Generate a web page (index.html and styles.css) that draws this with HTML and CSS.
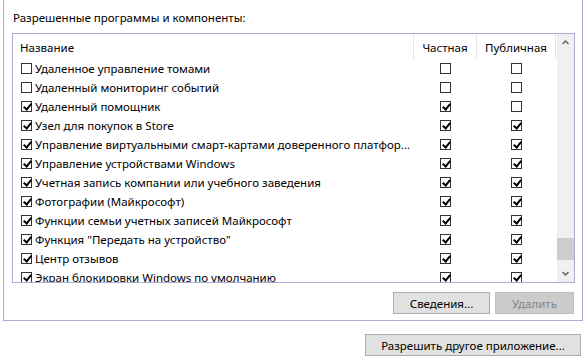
FILE: index.html
```html
<!DOCTYPE html>
<html lang="ru">
<head>
    <meta charset="UTF-8">
    <title>Разрешенные программы</title>
    <link rel="stylesheet" href="styles.css">
</head>
<body>

    <div class="group">
        <div class="group-title">Разрешенные программы и компоненты:</div>

        <div class="list">
            <div class="list-body">
                <div class="row row-head">
                    <div class="cell cell-name">Название</div>
                    <div class="cell cell-mid">Частная</div>
                    <div class="cell cell-mid">Публичная</div>
                </div>

                <div class="row">
                    <div class="cell cell-name"><span class="cb"></span>Удаленное управление томами</div>
                    <div class="cell cell-mid"><span class="cb"></span></div>
                    <div class="cell cell-mid"><span class="cb"></span></div>
                </div>
                <div class="row">
                    <div class="cell cell-name"><span class="cb"></span>Удаленный мониторинг событий</div>
                    <div class="cell cell-mid"><span class="cb"></span></div>
                    <div class="cell cell-mid"><span class="cb"></span></div>
                </div>
                <div class="row">
                    <div class="cell cell-name"><span class="cb on"></span>Удаленный помощник</div>
                    <div class="cell cell-mid"><span class="cb on"></span></div>
                    <div class="cell cell-mid"><span class="cb"></span></div>
                </div>
                <div class="row">
                    <div class="cell cell-name"><span class="cb on"></span>Узел для покупок в Store</div>
                    <div class="cell cell-mid"><span class="cb on"></span></div>
                    <div class="cell cell-mid"><span class="cb on"></span></div>
                </div>
                <div class="row">
                    <div class="cell cell-name"><span class="cb on"></span>Управление виртуальными смарт-картами доверенного платфор...</div>
                    <div class="cell cell-mid"><span class="cb on"></span></div>
                    <div class="cell cell-mid"><span class="cb on"></span></div>
                </div>
                <div class="row">
                    <div class="cell cell-name"><span class="cb on"></span>Управление устройствами Windows</div>
                    <div class="cell cell-mid"><span class="cb on"></span></div>
                    <div class="cell cell-mid"><span class="cb on"></span></div>
                </div>
                <div class="row">
                    <div class="cell cell-name"><span class="cb on"></span>Учетная запись компании или учебного заведения</div>
                    <div class="cell cell-mid"><span class="cb on"></span></div>
                    <div class="cell cell-mid"><span class="cb on"></span></div>
                </div>
                <div class="row">
                    <div class="cell cell-name"><span class="cb on"></span>Фотографии (Майкрософт)</div>
                    <div class="cell cell-mid"><span class="cb on"></span></div>
                    <div class="cell cell-mid"><span class="cb on"></span></div>
                </div>
                <div class="row">
                    <div class="cell cell-name"><span class="cb on"></span>Функции семьи учетных записей Майкрософт</div>
                    <div class="cell cell-mid"><span class="cb on"></span></div>
                    <div class="cell cell-mid"><span class="cb on"></span></div>
                </div>
                <div class="row">
                    <div class="cell cell-name"><span class="cb on"></span>Функция "Передать на устройство"</div>
                    <div class="cell cell-mid"><span class="cb on"></span></div>
                    <div class="cell cell-mid"><span class="cb on"></span></div>
                </div>
                <div class="row">
                    <div class="cell cell-name"><span class="cb on"></span>Центр отзывов</div>
                    <div class="cell cell-mid"><span class="cb on"></span></div>
                    <div class="cell cell-mid"><span class="cb on"></span></div>
                </div>
                <div class="row">
                    <div class="cell cell-name"><span class="cb on"></span>Экран блокировки Windows по умолчанию</div>
                    <div class="cell cell-mid"><span class="cb on"></span></div>
                    <div class="cell cell-mid"><span class="cb on"></span></div>
                </div>
            </div>

            <div class="scrollbar">
                <div class="scroll-btn">
                    <svg width="7" height="5" viewBox="0 0 7 5"><polyline points="0.5,4 3.5,1 6.5,4" fill="none" stroke="#606060" stroke-width="1.4"/></svg>
                </div>
                <div class="scroll-track">
                    <div class="scroll-thumb"></div>
                </div>
                <div class="scroll-btn">
                    <svg width="7" height="5" viewBox="0 0 7 5"><polyline points="0.5,1 3.5,4 6.5,1" fill="none" stroke="#606060" stroke-width="1.4"/></svg>
                </div>
            </div>
        </div>

        <div class="actions">
            <button class="btn btn-info">Сведения...</button>
            <button class="btn btn-remove" disabled>Удалить</button>
        </div>
    </div>

    <div class="footer">
        <button class="btn btn-allow">Разрешить другое приложение...</button>
    </div>

</body>
</html>
```

FILE: styles.css
```css
* {
    box-sizing: border-box;
    margin: 0;
    padding: 0;
    font-family: 'Noto Sans', sans-serif;
}

body {
    background-color: #ffffff;
    color: #000000;
    font-size: 11.5px;
    width: 586px;
    height: 356px;
    overflow: hidden;
}

.group {
    margin-left: 3px;
    width: 580px;
    height: 321px;
    border: 1px solid #acacd6;
    border-top: none;
}

.group-title {
    padding: 10px 0 0 9px;
    line-height: 16px;
    height: 33px;
}

.list {
    display: flex;
    margin-left: 8px;
    width: 563px;
    height: 250px;
    border: 1px solid #acacd6;
    overflow: hidden;
}

.list-body {
    flex: 1;
}

.row {
    display: grid;
    grid-template-columns: 401px 63px 79px;
    height: 19px;
    align-items: center;
}

.row-head {
    height: 25px;
}

.row-head .cell {
    height: 100%;
    border-right: 1px solid #e5e5e5;
    padding-top: 3px;
}

.row-head .cell-name {
    padding-left: 7px;
}

.cell {
    display: flex;
    align-items: center;
    white-space: nowrap;
    line-height: 16px;
}

.cell-name {
    padding-left: 8px;
}

.cell-mid {
    justify-content: center;
}

.cb {
    position: relative;
    display: inline-block;
    flex-shrink: 0;
    width: 11px;
    height: 11px;
    border: 1px solid #333333;
    background: #ffffff;
    margin-right: 3px;
}

.cell-mid .cb {
    margin-right: 0;
}

.cb.on::after {
    content: '';
    position: absolute;
    left: 3px;
    top: 0;
    width: 3px;
    height: 6px;
    border: solid #000000;
    border-width: 0 2px 2px 0;
    transform: rotate(40deg);
}

.scrollbar {
    width: 17px;
    display: flex;
    flex-direction: column;
    background-color: #f0f0f0;
}

.scroll-btn {
    height: 17px;
    display: flex;
    align-items: center;
    justify-content: center;
}

.scroll-track {
    flex: 1;
    display: flex;
    flex-direction: column;
    justify-content: flex-end;
}

.scroll-thumb {
    height: 22px;
    margin-bottom: 5px;
    background-color: #cdcdcd;
}

.actions {
    display: flex;
    justify-content: flex-end;
    gap: 5px;
    margin-top: 9px;
    padding-right: 8px;
}

.btn {
    height: 22px;
    font-size: 11.5px;
    background-color: #e1e1e1;
    color: #000000;
    border: 1px solid #adadad;
}

.btn-info {
    width: 97px;
}

.btn-remove {
    width: 79px;
}

.btn:disabled {
    background-color: #cccccc;
    border-color: #bfbfbf;
    color: #838383;
}

.footer {
    display: flex;
    justify-content: flex-end;
    margin-top: 13px;
    padding-right: 5px;
}

.btn-allow {
    width: 216px;
}
```
